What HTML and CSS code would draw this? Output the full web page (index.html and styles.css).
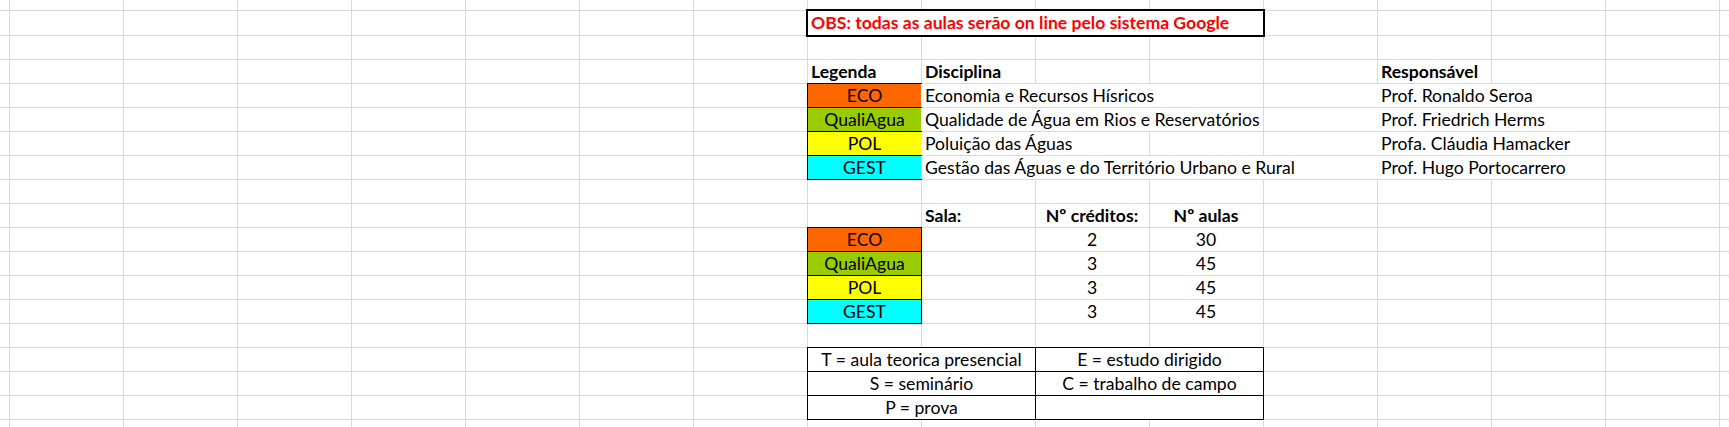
FILE: index.html
```html
<!DOCTYPE html>
<html lang="pt">
<head>
<meta charset="utf-8">
<title>Planilha</title>
<link rel="stylesheet" href="styles.css">
</head>
<body>
<div class="sheet">
  <div class="row row-top"></div>
  <div class="row row-first">
    <div class="cell h s4 obs">OBS: todas as aulas serão on line pelo sistema Google</div>
  </div>
  <div class="row"></div>
  <div class="row">
    <div class="cell h b">Legenda</div>
    <div class="cell i b">Disciplina</div>
    <div class="cell m b">Responsável</div>
  </div>
  <div class="row">
    <div class="cell h tag eco">ECO</div>
    <div class="cell i s3 fill">Economia e Recursos Hísricos</div>
    <div class="cell m s2 fill">Prof. Ronaldo Seroa</div>
  </div>
  <div class="row">
    <div class="cell h tag quali">QualiAgua</div>
    <div class="cell i s3 fill">Qualidade de Água em Rios e Reservatórios</div>
    <div class="cell m s2 fill">Prof. Friedrich Herms</div>
  </div>
  <div class="row">
    <div class="cell h tag pol">POL</div>
    <div class="cell i s2 fill">Poluição das Águas</div>
    <div class="cell m s2 fill">Profa. Cláudia Hamacker</div>
  </div>
  <div class="row">
    <div class="cell h tag gest">GEST</div>
    <div class="cell i s4 fill">Gestão das Águas e do Território Urbano e Rural</div>
    <div class="cell m s2 fill">Prof. Hugo Portocarrero</div>
  </div>
  <div class="row"></div>
  <div class="row">
    <div class="cell i b">Sala:</div>
    <div class="cell j b center">Nº créditos:</div>
    <div class="cell k b center">Nº aulas</div>
  </div>
  <div class="row">
    <div class="cell h tag eco">ECO</div>
    <div class="cell j center">2</div>
    <div class="cell k center">30</div>
  </div>
  <div class="row">
    <div class="cell h tag quali">QualiAgua</div>
    <div class="cell j center">3</div>
    <div class="cell k center">45</div>
  </div>
  <div class="row">
    <div class="cell h tag pol">POL</div>
    <div class="cell j center">3</div>
    <div class="cell k center">45</div>
  </div>
  <div class="row">
    <div class="cell h tag gest">GEST</div>
    <div class="cell j center">3</div>
    <div class="cell k center">45</div>
  </div>
  <div class="row"></div>
  <div class="row">
    <div class="cell h s2 box center">T = aula teorica presencial</div>
    <div class="cell j s2 box center">E = estudo dirigido</div>
  </div>
  <div class="row">
    <div class="cell h s2 box center">S = seminário</div>
    <div class="cell j s2 box center">C = trabalho de campo</div>
  </div>
  <div class="row">
    <div class="cell h s2 box center">P = prova</div>
    <div class="cell j s2 box center"></div>
  </div>
  <div class="row row-rest"></div>
</div>
</body>
</html>
```

FILE: styles.css
```css
* {
  box-sizing: border-box;
}

html,
body {
  margin: 0;
  padding: 0;
  background: #fff;
}

body {
  font-family: Lato, "Liberation Sans", Arial, sans-serif;
  font-size: 17.6px;
  color: #000;
}

.sheet {
  width: 1729px;
  height: 427px;
  overflow: hidden;
  display: flex;
  flex-direction: column;
  background-color: #fff;
  background-image: linear-gradient(to right, #d9d9d9 1px, transparent 1px);
  background-size: 114px 100%;
  background-position: 9px 0;
}

.row {
  flex: none;
  display: grid;
  grid-template-columns: 9px repeat(15, 114px) 1fr;
  grid-template-rows: 1fr;
  height: 24px;
  border-bottom: 1px solid #d9d9d9;
}

.row-top {
  height: 11px;
}

.row-first {
  height: 25px;
}

.row-rest {
  flex: 1;
  border-bottom: 0;
}

.cell {
  grid-row: 1;
  white-space: nowrap;
  line-height: 23px;
  padding: 0 4px;
  min-width: 0;
}

/* column placement */
.h { grid-column-start: 9; }
.i { grid-column-start: 10; }
.j { grid-column-start: 11; }
.k { grid-column-start: 12; }
.m { grid-column-start: 14; }

.s2 { grid-column-end: span 2; }
.s3 { grid-column-end: span 3; }
.s4 { grid-column-end: span 4; }

.b { font-weight: 700; }
.center { text-align: center; }

.fill {
  background: #fff;
}

.obs {
  margin: -2px -2px -1px -1px;
  border: 2px solid #000;
  background: #fff;
  color: #ff0000;
  font-weight: 700;
  padding-left: 3px;
  line-height: 24px;
}

.tag {
  margin: -1px -1px -1px 0;
  border: 1px solid #000;
  text-align: center;
}

.eco { background: #ff6600; }
.quali { background: #99cc00; }
.pol { background: #ffff00; }
.gest { background: #00ffff; }

.box {
  margin: -1px -1px -1px 0;
  border: 1px solid #000;
  background: #fff;
}
```
